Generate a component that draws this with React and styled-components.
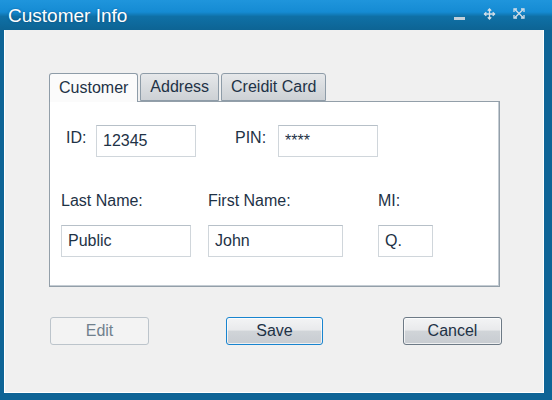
import React, { useState } from 'react';
import styled, { createGlobalStyle } from 'styled-components';

const GlobalStyle = createGlobalStyle`
  html, body {
    margin: 0;
    padding: 0;
    background: #ffffff;
  }
  body {
    font-family: "Liberation Sans", Arial, sans-serif;
  }
`;

const Window = styled.div`
  width: 552px;
  height: 400px;
  box-sizing: border-box;
  display: flex;
  flex-direction: column;
  background: #0e6496;
  overflow: hidden;
`;

const TitleBar = styled.div`
  height: 30px;
  flex-shrink: 0;
  display: flex;
  align-items: center;
  padding: 0 0 0 8px;
  background: linear-gradient(
    #1f95dc 0%,
    #158bd3 40%,
    #0f70a6 55%,
    #0d6494 100%
  );
`;

const Title = styled.div`
  flex: 1;
  color: #ffffff;
  font-size: 19px;
  line-height: 22px;
  margin-top: 1px;
  text-shadow: 0 0 2px rgba(0, 40, 80, 0.5);
`;

const Controls = styled.div`
  display: flex;
  align-items: center;
  height: 100%;
  margin-right: 18px;
`;

const ControlBtn = styled.div`
  width: 30px;
  height: 30px;
  display: flex;
  justify-content: center;
  align-items: ${(p) => (p.$low ? 'flex-end' : 'flex-start')};
  padding-top: ${(p) => (p.$low ? '0' : '8px')};
  padding-bottom: ${(p) => (p.$low ? '10px' : '0')};
  box-sizing: border-box;
`;

const Body = styled.div`
  flex: 1;
  margin: 0 8px 7px 4px;
  background: #f0f0f0;
  border: 1px solid #ffffff;
  border-top: none;
  padding: 43px 43px 0 44px;
  display: flex;
  flex-direction: column;
`;

const TabStrip = styled.div`
  display: flex;
  gap: 2px;
  height: 28px;
  position: relative;
  z-index: 1;
`;

const Tab = styled.div`
  box-sizing: border-box;
  height: ${(p) => (p.$active ? '29px' : '28px')};
  padding: 0 9px;
  display: flex;
  align-items: center;
  font-size: 16px;
  color: #1e3246;
  border: 1px solid #8e9ca8;
  border-bottom: ${(p) => (p.$active ? 'none' : '1px solid #8e9ca8')};
  border-radius: 3px 3px 0 0;
  background: ${(p) =>
    p.$active
      ? '#fbfbfb'
      : 'linear-gradient(#e6e8ea 0%, #dadde0 45%, #cdd1d5 100%)'};
  cursor: default;
`;

const Panel = styled.div`
  box-sizing: border-box;
  height: 186px;
  background: #ffffff;
  border: 1px solid #939fa9;
  box-shadow: inset -1px -1px 0 #c4ccd3;
  padding: 23px 0 0 16px;
`;

const TopRow = styled.div`
  display: flex;
  align-items: flex-start;
`;

const InlineLabel = styled.div`
  font-size: 16px;
  line-height: 18px;
  color: #1e3246;
  margin-top: 4px;
  width: ${(p) => p.$w}px;
  margin-left: ${(p) => p.$ml || 0}px;
`;

const Field = styled.input`
  box-sizing: border-box;
  width: ${(p) => p.$w}px;
  height: 32px;
  margin: 0;
  padding: 0 0 0 6px;
  border: 1px solid #d0d6db;
  border-top-color: #b7c0c8;
  background: #ffffff;
  font-family: "Liberation Sans", Arial, sans-serif;
  font-size: 16px;
  color: #1e3246;
  outline: none;
`;

const NameGrid = styled.div`
  display: grid;
  grid-template-columns: 130px 135px 55px;
  column-gap: 17px;
  row-gap: 15px;
  margin: 35px 0 0 -5px;
  & > div:nth-child(3),
  & > input:nth-child(6) {
    margin-left: 18px;
  }
`;

const StackLabel = styled.div`
  font-size: 16px;
  line-height: 18px;
  color: #1e3246;
`;

const ButtonRow = styled.div`
  display: flex;
  justify-content: space-between;
  margin: 30px -2px 0 1px;
`;

const Button = styled.button`
  box-sizing: border-box;
  width: ${(p) => (p.$focused ? '97px' : '99px')};
  height: 28px;
  margin: 0 ${(p) => (p.$focused ? '3px' : '0')} 0 0;
  padding: 0;
  border-radius: 3px;
  font-family: "Liberation Sans", Arial, sans-serif;
  font-size: 16px;
  color: ${(p) => (p.disabled ? '#70808d' : '#1e3246')};
  border: 1px solid
    ${(p) => (p.disabled ? '#bcc4cb' : p.$focused ? '#1884cf' : '#6d7a86')};
  background: ${(p) =>
    p.disabled
      ? '#f3f3f3'
      : 'linear-gradient(#f3f4f5 0%, #e9eaec 45%, #d0d4d8 52%, #c8ccd1 100%)'};
  box-shadow: ${(p) =>
    p.disabled ? 'none' : 'inset 0 0 0 1px rgba(255,255,255,0.7)'};
  cursor: default;
`;

const MinIcon = () => (
  <svg width="11" height="3" viewBox="0 0 11 3">
    <rect x="0" y="0" width="11" height="3" fill="#c3d0da" />
  </svg>
);

const MaxIcon = () => (
  <svg width="13" height="12" viewBox="0 0 13 12">
    <g stroke="#d6e0e8" strokeWidth="1.3" fill="none">
      <path d="M6.5 1v10M1.5 6h10" />
      <path d="M4.8 2.8L6.5 1l1.7 1.8M4.8 9.2l1.7 1.8 1.7-1.8M3.3 4.3L1.5 6l1.8 1.7M9.7 4.3L11.5 6l-1.8 1.7" />
    </g>
  </svg>
);

const CloseIcon = () => (
  <svg width="12" height="11" viewBox="0 0 12 11">
    <g stroke="#d6e0e8" strokeWidth="1.3" fill="none">
      <path d="M2 1.5l8 8M10 1.5l-8 8" />
      <path d="M1 4V1h3M8 1h3v3M1 7v3h3M11 7v3H8" />
    </g>
  </svg>
);

const tabs = ['Customer', 'Address', 'Creidit Card'];

export default function App() {
  const [active, setActive] = useState('Customer');

  return (
    <>
      <GlobalStyle />
      <Window>
        <TitleBar>
          <Title>Customer Info</Title>
          <Controls>
            <ControlBtn $low>
              <MinIcon />
            </ControlBtn>
            <ControlBtn>
              <MaxIcon />
            </ControlBtn>
            <ControlBtn>
              <CloseIcon />
            </ControlBtn>
          </Controls>
        </TitleBar>
        <Body>
          <TabStrip>
            {tabs.map((t) => (
              <Tab key={t} $active={t === active} onClick={() => setActive(t)}>
                {t}
              </Tab>
            ))}
          </TabStrip>
          <Panel>
            <TopRow>
              <InlineLabel $w={30}>ID:</InlineLabel>
              <Field $w={100} defaultValue="12345" />
              <InlineLabel $w={43} $ml={39}>
                PIN:
              </InlineLabel>
              <Field $w={100} defaultValue="****" />
            </TopRow>
            <NameGrid>
              <StackLabel>Last Name:</StackLabel>
              <StackLabel>First Name:</StackLabel>
              <StackLabel>MI:</StackLabel>
              <Field $w={130} defaultValue="Public" />
              <Field $w={135} defaultValue="John" />
              <Field $w={55} defaultValue="Q." />
            </NameGrid>
          </Panel>
          <ButtonRow>
            <Button disabled>Edit</Button>
            <Button $focused>Save</Button>
            <Button>Cancel</Button>
          </ButtonRow>
        </Body>
      </Window>
    </>
  );
}
